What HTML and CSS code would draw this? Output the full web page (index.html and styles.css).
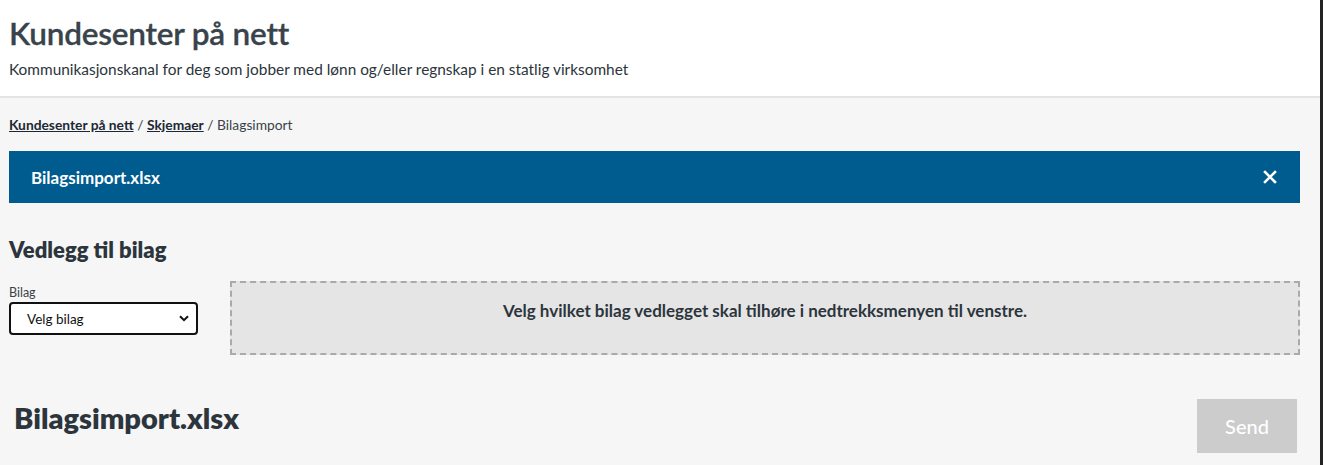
FILE: index.html
```html
<!DOCTYPE html>
<html lang="no">
<head>
<meta charset="utf-8">
<title>Kundesenter på nett</title>
<link rel="stylesheet" href="styles.css">
</head>
<body>
<div class="page">
  <header class="site-header">
    <h1 class="site-title">Kundesenter på nett</h1>
    <p class="site-sub">Kommunikasjonskanal for deg som jobber med lønn og/eller regnskap i en statlig virksomhet</p>
  </header>
  <main class="main">
    <nav class="crumbs"><a href="#">Kundesenter på nett</a> / <a href="#">Skjemaer</a> / Bilagsimport</nav>
    <div class="file-bar">
      <span class="file-name">Bilagsimport.xlsx</span>
      <button class="close" aria-label="Lukk">
        <svg width="14" height="14" viewBox="0 0 14 14"><path d="M2 2 L12 12 M12 2 L2 12" stroke="#fff" stroke-width="2.6" stroke-linecap="square"/></svg>
      </button>
    </div>
    <h2 class="section-title">Vedlegg til bilag</h2>
    <div class="attach-row">
      <div class="field">
        <label class="field-label" for="bilag">Bilag</label>
        <div class="select">
          <span>Velg bilag</span>
          <svg width="10" height="7" viewBox="0 0 10 7"><path d="M1 1.2 L5 5.2 L9 1.2" fill="none" stroke="#111" stroke-width="2"/></svg>
        </div>
      </div>
      <div class="dropzone">Velg hvilket bilag vedlegget skal tilhøre i nedtrekksmenyen til venstre.</div>
    </div>
    <div class="bottom-row">
      <h2 class="big-file">Bilagsimport.xlsx</h2>
      <button class="send">Send</button>
    </div>
  </main>
</div>
</body>
</html>
```
FILE: styles.css
```css
html, body { margin: 0; padding: 0; }
body {
  font-family: Lato, "Open Sans", sans-serif;
  color: #2c353c;
  background: #f6f6f6;
}
.page {
  min-height: 465px;
  border-right: 3px solid #232323;
  box-sizing: border-box;
}
.site-header {
  background: #fff;
  border-bottom: 2px solid #e4e4e4;
  padding: 15px 9px 0;
  height: 98px;
  box-sizing: border-box;
}
.site-title {
  margin: 0;
  font-size: 31.5px;
  font-weight: 600;
  color: #38434c;
  line-height: 36px;
  letter-spacing: -0.2px;
  -webkit-text-stroke: 0.3px #38434c;
}
.site-sub {
  margin: 8px 0 0;
  font-size: 15.4px;
  line-height: 20px;
  color: #2c353c;
}
.main {
  padding: 18px 20px 0 9px;
}
.crumbs {
  font-size: 13.8px;
  line-height: 18px;
  color: #39424a;
}
.crumbs a {
  color: #1c2834;
  font-weight: 700;
  text-decoration: underline;
}
.file-bar {
  margin-top: 17px;
  height: 52px;
  background: #005b8f;
  display: flex;
  align-items: center;
  justify-content: space-between;
  padding: 0 22px;
}
.file-name {
  color: #fff;
  font-size: 17px;
  font-weight: 700;
}
.close {
  background: none;
  border: 0;
  padding: 0;
  display: flex;
  margin-right: 1px;
}
.section-title {
  margin: 34px 0 0;
  font-size: 22px;
  font-weight: 800;
  line-height: 26px;
  color: #2c353c;
}
.attach-row {
  display: flex;
  gap: 32px;
  margin-top: 18px;
}
.field {
  width: 189px;
  flex: none;
  padding-top: 4px;
}
.field-label {
  display: block;
  font-size: 12.5px;
  line-height: 15px;
  color: #39424a;
}
.select {
  margin-top: 2px;
  height: 33px;
  box-sizing: border-box;
  border: 2px solid #111;
  border-radius: 4px;
  background: #fff;
  display: flex;
  align-items: center;
  justify-content: space-between;
  padding: 0 7px 0 16px;
  font-size: 13.5px;
  color: #111;
}
.dropzone {
  flex: 1;
  height: 74px;
  box-sizing: border-box;
  background: #e5e5e5;
  border: 2px dashed #aaaaaa;
  text-align: center;
  padding-top: 17px;
  font-size: 17px;
  font-weight: 700;
  color: #2c353c;
}
.bottom-row {
  display: flex;
  justify-content: space-between;
  align-items: flex-start;
  margin-top: 44px;
}
.big-file {
  margin: 2px 0 0 5px;
  font-size: 29px;
  font-weight: 800;
  line-height: 34px;
  color: #2c353c;
}
.send {
  width: 100px;
  height: 54px;
  margin-right: 3px;
  background: #cccccc;
  border: 0;
  color: #fff;
  font-family: inherit;
  font-size: 20px;
  font-weight: 500;
}
```
